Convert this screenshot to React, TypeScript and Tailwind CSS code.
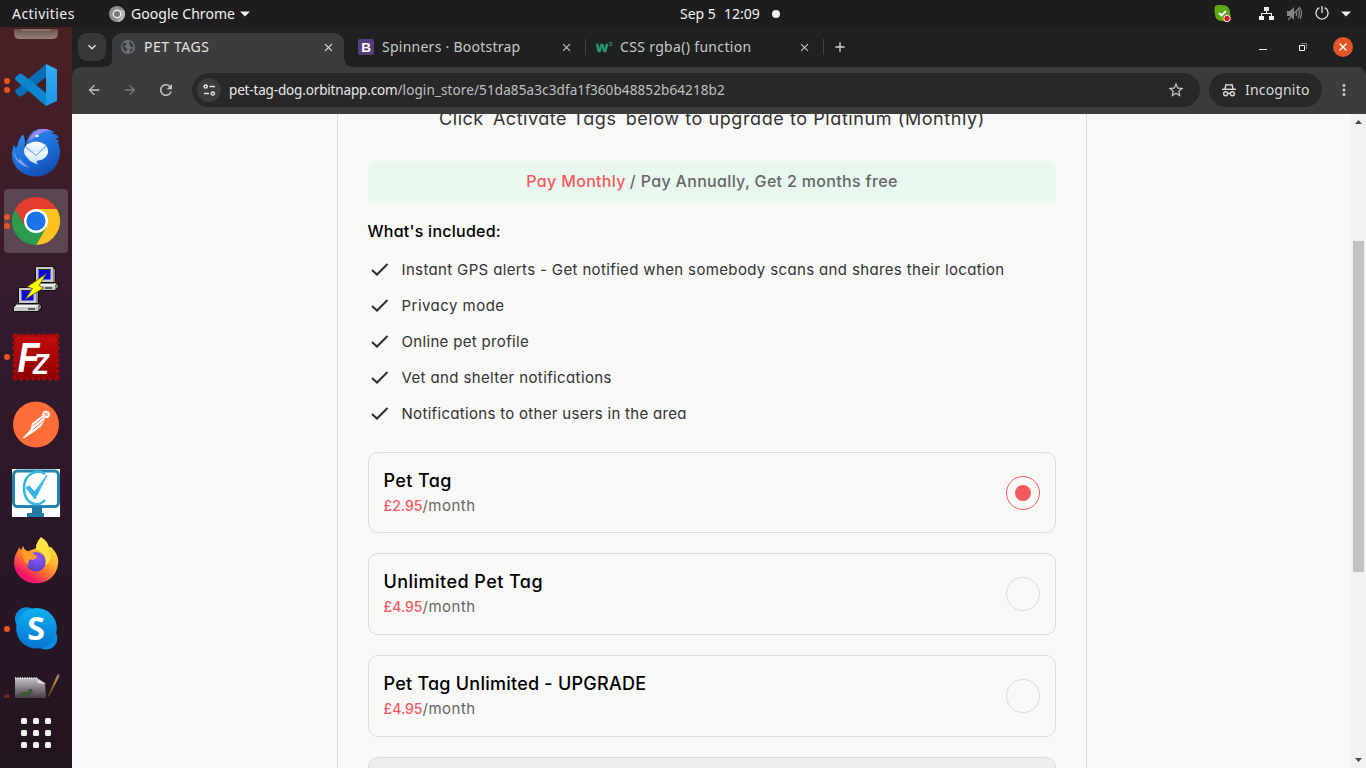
import type { ReactNode } from "react";
import { MdArrowBack, MdArrowForward, MdClose, MdMoreVert, MdRefresh, MdStarBorder, MdExpandMore, MdAdd } from "react-icons/md";

const ui = "font-['Noto_Sans','Liberation_Sans',sans-serif]";
const page = "font-[Inter,'Liberation_Sans',sans-serif] [font-feature-settings:'cv11']";

/* ---------- dock icons ---------- */

function VsCode() {
  return (
    <svg width="48" height="48" viewBox="0 0 48 48">
      <defs>
        <linearGradient id="vs" x1="0" y1="0" x2="0" y2="1"><stop offset="0" stopColor="#33aef2" /><stop offset="1" stopColor="#1f93ea" /></linearGradient>
      </defs>
      <path d="M34 3v13L10 35q-1.600 1.200-3 0l-3.400-3.200q-1.200-1.500 0-2.800z" fill="#0a6db5" />
      <path d="M34 45V32L10 13q-1.600-1.200-3 0l-3.400 3.200q-1.200 1.500 0 2.800z" fill="#0c86d1" />
      <path d="M34 3 45 8.200V39.800L34 45z" fill="url(#vs)" />
    </svg>
  );
}

function Thunderbird() {
  return (
    <svg width="48" height="48" viewBox="0 0.500 48 48">
      <defs>
        <linearGradient id="tb" x1="0.2" y1="0" x2="0.7" y2="1"><stop offset="0" stopColor="#2d8ff0" /><stop offset="0.600" stopColor="#1a6ad6" /><stop offset="1" stopColor="#124aa8" /></linearGradient>
        <linearGradient id="tbw" x1="0" y1="0" x2="0" y2="1"><stop offset="0" stopColor="#fff" /><stop offset="1" stopColor="#b5dcff" /></linearGradient>
      </defs>
      <path d="M11 6c-3 3-5 6-5 10l-2 4-2-4c-1 3-2 6-2 10 0 12 10 22 24 22 14 0 24-11 24-25 0-4-1-7-2-9l1-2-4-2 4-1-3-3-4-1 2-2-6-2c-8-2-16 0-20 9-2 4-3 8-1 12l-3-2c2-5 1-11-1-14z" fill="url(#tb)" />
      <path d="M1 21c2 12 7 16 16 18-4-3-7-6-9-9l-1 2c-3-3-5-7-6-11z" fill="#7fa0ee" />
      <path d="M17 13c1-6 5-10 10-12 5-1 9 0 12 1-7 0-11 3-15 6-3 2-5 3-7 5z" fill="#9a86ee" />
      <ellipse cx="24" cy="22.500" rx="12" ry="9.500" fill="url(#tbw)" />
      <path d="M13 24c2 8 8 11 14 12-2-1-3-2-2-4 6 0 10-3 11-9z" fill="url(#tbw)" />
      <path d="m14 18.500 10 8.500 10-9.500" fill="none" stroke="#8bb4dd" strokeWidth="1.200" />
      <ellipse cx="25" cy="7.500" rx="2" ry="1.200" fill="#cdeaff" />
    </svg>
  );
}

function Chrome() {
  return (
    <svg width="48" height="48" viewBox="0 0 48 48">
      <path d="M24 12h20.800A24 24 0 0 1 24 48l10.400-18z" fill="#fcc31e" />
      <path d="M34.400 30 24 48A24 24 0 0 1 3.200 12l10.400 18z" fill="#2b9c4b" />
      <path d="M13.600 30 3.200 12a24 24 0 0 1 41.600 0H24z" fill="#e33b2e" />
      <circle cx="24" cy="24" r="12" fill="#fff" />
      <circle cx="24" cy="24" r="9.600" fill="#1b73e8" />
    </svg>
  );
}

function Computer() {
  return (
    <g>
      <path d="M6 0h17l3 2v14h1l2 2v4l-3 3H0v-5l3-3h2V1z" fill="#111" />
      <path d="M6 1h17v15H6z" fill="#c9c9c9" />
      <path d="M8.500 4h12v9.500h-12z" fill="#0a0ae6" />
      <path d="M8 3.500h13" stroke="#333" />
      <path d="M23 2l2 1.500V16h-2z" fill="#858585" />
      <path d="M1 20h24v4H1z" fill="#c9c9c9" />
      <path d="m3.500 17.500-2 2.500h23l2.500-2.500z" fill="#eee" />
      <path d="M15 22h7" stroke="#222" strokeWidth="1.300" />
      <path d="M25 24 28 21v-3l-3 2z" fill="#858585" />
    </g>
  );
}

function Putty() {
  return (
    <svg width="48" height="48" viewBox="0 0 48 48">
      <g transform="translate(18 1)"><Computer /></g>
      <g transform="translate(1 22)"><Computer /></g>
      <path d="M34.500 8.500 15 22l5.500 1.500L13 34.500 31.500 23 27 20.500z" fill="#ffff00" stroke="#4a4a00" strokeWidth="0.800" />
    </svg>
  );
}

function FileZilla() {
  const teeth = [1, 7, 13, 19, 24.500, 30, 36, 42];
  return (
    <svg width="48" height="48" viewBox="0 0 48 48">
      <defs><linearGradient id="fz" x1="0" y1="0" x2="0" y2="1"><stop offset="0" stopColor="#c20d0d" /><stop offset="1" stopColor="#8f0000" /></linearGradient></defs>
      <path d="M2 2h44v44H2z" fill="url(#fz)" />
      {teeth.map((t) => (
        <g key={t} fill="#a50a0a">
          <circle cx={t + 2.200} cy="2.300" r="2" /><circle cx={t + 2.200} cy="45.700" r="2" />
          <circle cx="2.300" cy={t + 2.200} r="2" /><circle cx="45.700" cy={t + 2.200} r="2" />
        </g>
      ))}
      <text transform="translate(5.500 38.500) scale(.86 1)" fontSize="42" fontWeight="700" fontStyle="italic" fontFamily="Liberation Sans" fill="#fff">F<tspan dx="-7.500" dy="2" fontSize="30">Z</tspan></text>
    </svg>
  );
}

function Postman() {
  return (
    <svg width="48" height="48" viewBox="0 0.500 48 48">
      <circle cx="24" cy="24" r="23" fill="#ff6c37" />
      <circle cx="34" cy="14" r="3.800" fill="#fff" />
      <path d="m30 15-10 8-1.500 6-8 8.500h2L21 32l8-6 4-7z" fill="#fff" />
      <path d="m31 17-10 8.500M32.500 19.500l-11 9M32 12.500l4 2.500M35.500 12 33 16" stroke="#ff6c37" strokeWidth="0.900" fill="none" />
    </svg>
  );
}

function MonitorCheck() {
  return (
    <svg width="48" height="48" viewBox="0 0 48 48">
      <path d="M0 0h48v48H0z" fill="#fff" />
      <rect x="1.500" y="2" width="45" height="35.500" rx="4" fill="none" stroke="#2285ae" strokeWidth="3" />
      <path d="M20 38h10v6h2v4H15v-4h5z" fill="#1d7ba5" />
      <path d="M33 5C25-1 12 5 12 19c0 15 13 21 21 12" fill="none" stroke="#35b6e6" strokeWidth="2.600" />
      <path d="M14 18.500 17.500 17l5 6L35 6 23 30z" fill="#35b6e6" stroke="#35b6e6" strokeWidth="1" />
    </svg>
  );
}

function Firefox() {
  return (
    <svg width="48" height="48" viewBox="0 0.700 48 48">
      <defs>
        <linearGradient id="ff" x1="0.850" y1="0.050" x2="0.250" y2="0.950"><stop offset="0" stopColor="#fff04a" /><stop offset="0.400" stopColor="#ffb02c" /><stop offset="0.650" stopColor="#ff6a30" /><stop offset="0.900" stopColor="#f5156c" /></linearGradient>
        <radialGradient id="ffp" cx="0.600" cy="0.300" r="0.700"><stop offset="0" stopColor="#9059ff" /><stop offset="1" stopColor="#5b3fc4" /></radialGradient>
      </defs>
      <path d="M29 1c5 3 7 6 8 10 2-1 3 0 4 2 4 5 6 9 5 15-1 11-10 19-22 19S2 38 2 26c0-5 2-9 4-12l1-3 2 3 2-4c1 3 2 4 5 5l8-3c0-4 2-8 5-11z" fill="url(#ff)" />
      <circle cx="24" cy="25.500" r="9.800" fill="url(#ffp)" />
      <path d="M11 10c1 3 3 5 6 5 3 1 5 3 8 5-1 3-4 4-7 3-2 2-2 4-1 7-5-5-9-12-6-20z" fill="#ff9a27" />
      <path d="M29 1c5 3 7 7 8 12 3 7 2 13-4 16 2-6 0-11-5-14-3-2-4-2-4-3 0-4 2-8 5-11z" fill="#ffe345" />
    </svg>
  );
}

function Skype() {
  return (
    <svg width="48" height="48" viewBox="0 0.700 48 48">
      <defs><linearGradient id="sk" x1="0" y1="0" x2="0" y2="1"><stop offset="0" stopColor="#0db1f0" /><stop offset="1" stopColor="#0873d2" /></linearGradient></defs>
      <circle cx="14.500" cy="14.500" r="11.500" fill="#0a8fd8" />
      <circle cx="34" cy="34" r="11.300" fill="#0a8fe0" />
      <circle cx="24.500" cy="24" r="20.300" fill="url(#sk)" />
      <text x="24" y="35.500" textAnchor="middle" fontSize="32" fontWeight="700" fontFamily="Open Sans" fill="#fff">S</text>
    </svg>
  );
}

function Notepad() {
  return (
    <svg width="48" height="24" viewBox="0 0 48 24">
      <defs>
        <linearGradient id="np" x1="0" y1="0" x2="0" y2="1"><stop offset="0" stopColor="#c4c1c4" /><stop offset="1" stopColor="#4a3d47" /></linearGradient>
        <linearGradient id="pc" x1="0" y1="0" x2="0" y2="1"><stop offset="0" stopColor="#d29a2a" /><stop offset="1" stopColor="#4d3818" /></linearGradient>
      </defs>
      <path d="M3 4h22l8 5 1 15H3z" fill="url(#np)" />
      <path d="M3 4h23" stroke="#efeaef" strokeWidth="1.500" strokeDasharray="1.300 1" />
      <path d="m25 5 1 4 8 1z" fill="#e5e2e5" />
      <path d="M7 22q2-5 8-4l2-3h3l1 3-3 3-4 2z" fill="#3f5a3b" />
      <path d="M44.500 2.500 46.500 4 37 23l-1.500-.5z" fill="url(#pc)" />
      <path d="m46.500 1-1.500 3.500" stroke="#8a7e84" strokeWidth="2.400" />
      <path d="m46.700 0-.6 1.500" stroke="#a83b35" strokeWidth="2.400" />
    </svg>
  );
}

function DockItem({ children, dots = 0, active = false }: { children: ReactNode; dots?: number; active?: boolean }) {
  return (
    <div className="flex h-[68px] w-[72px] shrink-0 items-center">
      <div className={active ? "relative ml-1 flex size-16 items-center justify-center rounded-[4px] bg-[#5c4654]" : "relative ml-1 flex size-16 items-center justify-center"}>
        <div className="absolute top-0 left-0 flex h-full flex-col items-center justify-center gap-[3px]">
          {Array.from({ length: dots }, (_, i) => (
            <span key={i} className="size-1.5 rounded-full bg-[#e95420]" />
          ))}
        </div>
        {children}
      </div>
    </div>
  );
}

function Dock() {
  return (
    <aside className="flex w-[72px] shrink-0 flex-col overflow-hidden bg-linear-to-b from-[#4b2023] via-[#321a2e] via-40% to-[#22141f]">
      <div className="flex h-6 shrink-0 justify-center pt-[2px]">
        <div className="flex h-[10px] w-11 justify-center rounded-b-[5px] bg-linear-to-b from-[#66514d] to-[#958078]">
          <div className="h-[2px] w-[30px] rounded-b bg-[#8a706b]" />
        </div>
      </div>
      <DockItem dots={2}><VsCode /></DockItem>
      <DockItem><Thunderbird /></DockItem>
      <DockItem dots={2} active><Chrome /></DockItem>
      <DockItem><Putty /></DockItem>
      <DockItem dots={1}><FileZilla /></DockItem>
      <DockItem><Postman /></DockItem>
      <DockItem><MonitorCheck /></DockItem>
      <DockItem><Firefox /></DockItem>
      <DockItem dots={1}><Skype /></DockItem>
      <div className="flex h-[35px] shrink-0 items-end gap-[5px] pl-1">
        <span className="h-[4px] w-1.5 rounded-t-full bg-[#5e2820]" />
        <div className="-ml-[3px] flex"><Notepad /></div>
      </div>
      <div className="flex h-[70px] shrink-0 items-center justify-center pb-px">
        <svg width="30" height="30" viewBox="0 0 30 30" fill="#f2f1ee">
          {[0, 12, 24].map((y) => [0, 12, 24].map((x) => <rect key={`${x}-${y}`} x={x} y={y} width="6" height="6" rx="1.500" />))}
        </svg>
      </div>
    </aside>
  );
}

/* ---------- system bar ---------- */

function TopBar() {
  return (
    <header className={`flex h-[27px] shrink-0 items-center bg-[#1d1d1d] text-sm text-[#f2f2f2] ${ui}`}>
      <span className="w-[97px] pl-3 tracking-[0.45px]">Activities</span>
      <svg className="ml-3 shrink-0" width="16" height="16" viewBox="0 0 16 16">
        <circle cx="8" cy="8" r="8" fill="#8d8d8d" />
        <path d="M8 4h7A8 8 0 0 1 8 16l4-6z" fill="#b5b5b5" />
        <circle cx="8" cy="8" r="4.400" fill="#ededed" />
        <circle cx="8" cy="8" r="3" fill="#777" />
      </svg>
      <span className="ml-[6px] w-[110px] tracking-[0.05px] whitespace-nowrap">Google Chrome</span>
      <svg className="-ml-px shrink-0" width="10" height="6" viewBox="0 0 10 6"><path d="M0 .5h10L5 5.500z" fill="#f2f2f2" /></svg>
      <span className="ml-[430px] w-11 whitespace-nowrap">Sep 5</span>
      <span className="w-12">12:09</span>
      <span className="size-2 rounded-full bg-[#f2f2f2]" />
      <div className="ml-auto flex h-full items-center pr-[15px]">
        <svg className="mr-[28px]" width="17" height="17" viewBox="0 0 17 17">
          <path d="M1 1q4-2 7-1 8 0 8 8 1 3 0 6-2 3-8 2-7 0-7-7-1-4 0-8z" fill="#5fa715" />
          <path d="m5 8 2.500 2.500L12 6" fill="none" stroke="#fff" strokeWidth="1.800" />
          <circle cx="13" cy="13.500" r="3.200" fill="#e81123" stroke="#fff" strokeWidth="0.900" />
        </svg>
        <svg className="mr-[13px]" width="15" height="14" viewBox="0 0 15 14" fill="#f2f2f2">
          <path d="M5 0h5v4H8v2h5v3h2v4h-5V9h2V7H3v2h2v4H0V9h2V6h5V4H5z" />
        </svg>
        <svg className="mr-[13px]" width="15" height="15" viewBox="0 0 15 15" fill="none" stroke="#858585" strokeWidth="1.200">
          <path d="M0 5h3l4-4v13l-4-4H0z" fill="#858585" stroke="none" />
          <path d="M9 5q1.500 2.500 0 5M11 3q3 4 0 9M13 2q3 5 0 11M1 14 13 1" />
        </svg>
        <svg className="mr-[12px] -mt-px" width="14" height="14" viewBox="0 0 14 14" fill="none" stroke="#e2e2e2" strokeWidth="1.300">
          <path d="M4.300 1.700a6 6 0 1 0 5.400 0M7 0v7" />
        </svg>
        <svg width="10" height="6" viewBox="0 0 10 6"><path d="M0 .5h10L5 5.500z" fill="#f2f2f2" /></svg>
      </div>
    </header>
  );
}

/* ---------- browser ---------- */

function TabStrip() {
  return (
    <div className="flex h-10 shrink-0 items-center bg-[#1f2120] text-sm whitespace-nowrap text-[#c7c9c8]">
      <div className="ml-[6px] flex h-7 w-7 shrink-0 items-center justify-center rounded-[9px] bg-[#373938]">
        <MdExpandMore className="size-4 text-[#e3e3e3]" />
      </div>
      <svg className="-mr-px ml-[-3px] shrink-0 self-end" width="10" height="10"><path d="M10 0v10H0Q10 10 10 0" fill="#3c3c3c" /></svg>
      <div className="flex h-[34px] w-[232px] shrink-0 items-center self-end rounded-t-[10px] bg-[#3c3c3c] pb-[6px] text-[#e3e3e3]">
        <svg className="mx-[9px]" width="14" height="14" viewBox="0 0 14 14">
          <circle cx="7" cy="7" r="7" fill="#6a7076" />
          <path d="M2 3q3-1 4 1-1 2-3 2l2 1.500Q7 8 6 10l-1 2Q1 9 1.500 5zM8 1.500Q12 2 12.500 6L11 7.500 9 6 8 4zM9 9l3-.5q-1 3-3 4z" fill="#3c3c3c" />
        </svg>
        <span className="w-[178px] tracking-[0.55px]">PET TAGS</span>
        <MdClose className="size-[13px] shrink-0" />
      </div>
      <svg className="shrink-0 self-end" width="10" height="10"><path d="M0 0v10h10Q0 10 0 0" fill="#3c3c3c" /></svg>
      <svg className="ml-1 shrink-0" width="16" height="16" viewBox="0 0 16 16">
        <rect width="16" height="16" rx="2" fill="#563d7c" />
        <text x="8" y="13" textAnchor="middle" fontSize="13.500" fontWeight="700" fontFamily="Liberation Sans" fill="#fff">B</text>
      </svg>
      <span className="ml-2 w-[178px] tracking-[0.25px]">Spinners · Bootstrap</span>
      <MdClose className="size-[13px] shrink-0" />
      <span className="ml-[12px] h-4 w-px bg-[#434544]" />
      <svg className="ml-[10px] shrink-0" width="17" height="16" viewBox="0 0 17 16" fill="#2c9c69" fontFamily="Liberation Sans" fontWeight="700">
        <text x="0" y="12.500" fontSize="15.500" stroke="#2c9c69" strokeWidth="0.500">w</text>
        <text x="13" y="7" fontSize="6">3</text>
      </svg>
      <span className="ml-[7px] w-[178px] tracking-[0.33px]">CSS rgba() function</span>
      <MdClose className="size-[13px] shrink-0" />
      <span className="ml-[12px] h-4 w-px bg-[#434544]" />
      <MdAdd className="ml-[8px] size-4 shrink-0 text-[#d5d5d5]" />
      <div className="ml-auto flex items-center pr-[13px]">
        <span className="mt-[5px] mr-[32px] h-px w-2 bg-[#f2f2f2]" />
        <svg className="mr-[26px]" width="8" height="8" viewBox="0 0 8 8" fill="none">
          <path d="M2 .5h5.500V6" stroke="#808080" />
          <path d="M.5 2.500h5v5h-5z" stroke="#fff" />
        </svg>
        <span className="flex size-5 items-center justify-center rounded-full bg-[#e35429]">
          <svg width="8" height="8" viewBox="0 0 8 8" stroke="#fff" strokeWidth="1.300"><path d="m.5.500 7 7M7.500.500l-7 7" /></svg>
        </span>
      </div>
    </div>
  );
}

function Toolbar() {
  return (
    <div className="bg-[#1f2120]">
      <div className="flex h-[47px] items-center rounded-t-[9px] bg-[#3c3c3c] pb-[1px] text-[#c7c7c7]">
        <MdArrowBack className="ml-[14px] size-4" />
        <MdArrowForward className="ml-5 size-4 text-[#7b7b7b]" />
        <MdRefresh className="ml-[19px] size-[18px]" />
        <div className="ml-[17px] flex h-[34px] w-[1008px] items-center rounded-full bg-[#282828] pl-[5px]">
          <span className="flex size-6 items-center justify-center rounded-full bg-[#3c3c3c]">
            <svg width="13" height="12" viewBox="0 0 13 12" fill="none" stroke="#e3e3e3" strokeWidth="1.500">
              <circle cx="2.700" cy="2.500" r="1.600" /><path d="M6.500 2.500h5.500M1 9.500h5" /><circle cx="9.800" cy="9.500" r="1.600" />
            </svg>
          </span>
          <span className="ml-2 flex text-[13.5px] whitespace-nowrap">
            <span className="tracking-[-0.16px] text-[#e8e8e8]">pet-tag-dog.orbitnapp.com</span>
            <span className="tracking-[0.11px] text-[#c0c0c0]">/login_store/51da85a3c3dfa1f360b48852b64218b2</span>
          </span>
          <MdStarBorder className="mr-[15px] ml-auto size-[18px]" />
        </div>
        <div className="ml-[9px] flex h-[34px] w-[113px] items-center rounded-full bg-[#282828] pl-[13px] text-[#dadada]">
          <svg width="14" height="14" viewBox="0 0 14 14" fill="none" stroke="#dadada" strokeWidth="1.400">
            <path d="M0 6.300h14" /><path d="M3 6 4 1.500l3 .6 3-.6L11 6" />
            <circle cx="3.600" cy="10.800" r="2" /><circle cx="10.400" cy="10.800" r="2" /><path d="M5.500 10.300h3" />
          </svg>
          <span className="ml-[9px] text-sm tracking-[0.17px]">Incognito</span>
        </div>
        <MdMoreVert className="ml-[13px] size-[18px]" />
      </div>
    </div>
  );
}

/* ---------- page ---------- */

const features = [
  { text: "Instant GPS alerts - Get notified when somebody scans and shares their location", cls: "tracking-[0.36px]" },
  { text: "Privacy mode", cls: "tracking-[0.47px]" },
  { text: "Online pet profile", cls: "tracking-[0.33px]" },
  { text: "Vet and shelter notifications", cls: "tracking-[0.38px]" },
  { text: "Notifications to other users in the area", cls: "tracking-[0.31px]" },
];

const plans = [
  { name: "Pet Tag", price: "£2.95", box: "h-[81px]", cls: "tracking-[0.4px]", checked: true },
  { name: "Unlimited Pet Tag", price: "£4.95", box: "h-[82px]", cls: "tracking-[0.46px]", checked: false },
  { name: "Pet Tag Unlimited - UPGRADE", price: "£4.95", box: "h-[82px]", cls: "tracking-[0.24px]", checked: false },
];

function Content() {
  return (
    <main className={`flex w-[750px] flex-col border-x border-[#dadad8] px-[30px] ${page}`}>
      <p className="-mt-[9px] flex h-[27px] shrink-0 justify-center text-[18px] leading-[27px] tracking-[0.52px] whitespace-pre text-[#333]">
        <span>Click  </span>
        <span className="-ml-[2px]">Activate Tags  </span>
        <span className="-ml-[2px] tracking-[0.58px]">below to upgrade to Platinum (Monthly)</span>
      </p>
      <div className="mt-[29px] flex h-[42px] shrink-0 items-center justify-center gap-1 rounded-[6px] bg-[#e9f8ee] pb-[2px] text-base font-medium tracking-[0.33px] text-[#666]">
        <span className="text-[#f4595f]">Pay Monthly</span>
        <span>/ Pay Annually, Get 2 months free</span>
      </div>
      <h2 className="mt-4 -ml-[0.5px] h-6 shrink-0 text-base leading-6 font-medium tracking-[0.25px] text-black">What's included:</h2>
      <ul className="mt-[9px] shrink-0">
        {features.map((f) => (
          <li key={f.text} className="flex h-9 items-center text-[15px] text-[#333]">
            <svg className="mr-[12.5px] ml-[3px] shrink-0" width="18" height="14" viewBox="0 0 18 14"><path d="m1 7 5 4.500L16.500 1" fill="none" stroke="#263238" strokeWidth="2" /></svg>
            <span className={f.cls}>{f.text}</span>
          </li>
        ))}
      </ul>
      <div className="mt-5 flex shrink-0 flex-col gap-5">
        {plans.map((p) => (
          <div key={p.name} className={`flex items-center justify-between rounded-[10px] border border-[#dadada] px-[15px] ${p.box}`}>
            <div className="-ml-[0.5px] pb-[2px]">
              <div className={`text-[18px] leading-[27px] font-medium text-black ${p.cls}`}>{p.name}</div>
              <div className="flex text-[15px] leading-[23px] text-[#666]">
                <span className="text-sm leading-[23px] font-medium text-[#f4595f]">{p.price}</span>
                <span className="tracking-[0.5px]">/month</span>
              </div>
            </div>
            <span className={p.checked ? "flex size-[34px] items-center justify-center rounded-full border border-[#f4595f]" : "size-[34px] rounded-full border border-[#dadada]"}>
              {p.checked && <span className="size-4 rounded-full bg-[#f4595f]" />}
            </span>
          </div>
        ))}
        <div className="h-[82px] rounded-[10px] border border-[#dadada] bg-[#ededed]" />
      </div>
    </main>
  );
}

function Scrollbar() {
  return (
    <div className="flex w-[15px] shrink-0 flex-col items-center bg-[#f1f1f1]">
      <svg className="mt-[6px] shrink-0" width="7" height="4"><path d="M0 4 3.500 0 7 4z" fill="#4b4b4b" /></svg>
      <div className="mt-[117px] h-[331px] w-[11px] bg-[#c1c1c1]" />
      <svg className="mt-auto mb-[6px]" width="7" height="4"><path d="M0 0 3.500 4 7 0z" fill="#4b4b4b" /></svg>
    </div>
  );
}

export default function App() {
  return (
    <div className="flex h-[768px] w-[1366px] flex-col overflow-hidden">
      <TopBar />
      <div className="flex min-h-0 flex-1">
        <Dock />
        <div className={`flex min-w-0 flex-1 flex-col ${ui}`}>
          <TabStrip />
          <Toolbar />
          <div className="flex min-h-0 flex-1 overflow-hidden bg-[#f8f8f6]">
            <div className="flex flex-1 justify-start overflow-hidden pl-[265px]"><Content /></div>
            <Scrollbar />
          </div>
        </div>
      </div>
    </div>
  );
}
